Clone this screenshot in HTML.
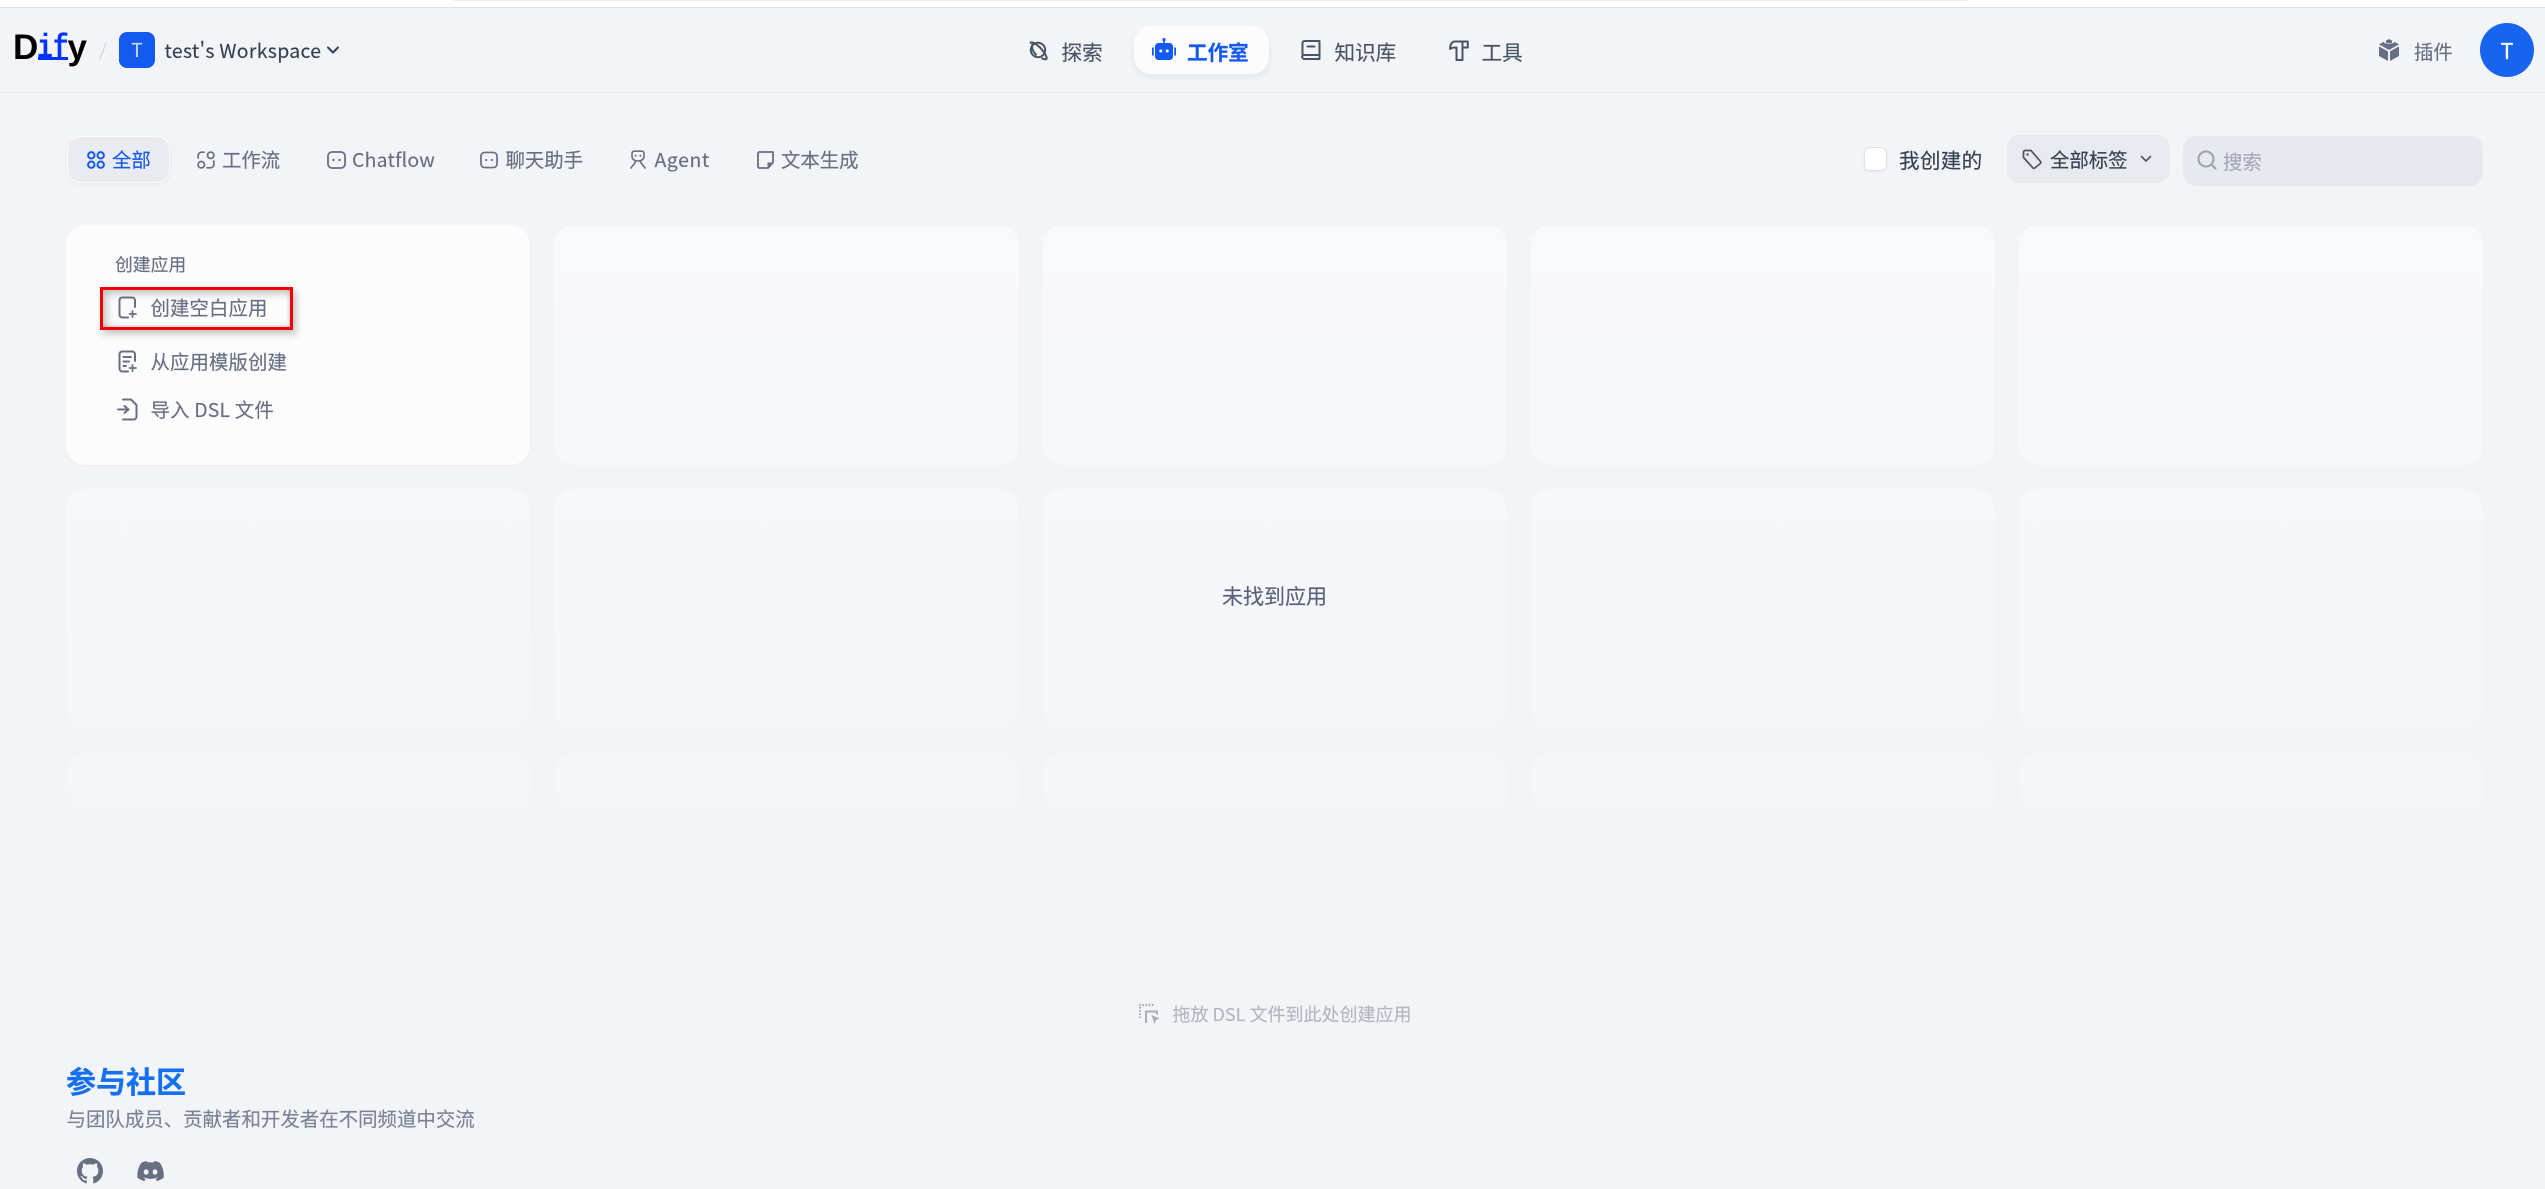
<!DOCTYPE html>
<html lang="zh"><head><meta charset="utf-8"><title>Dify</title>
<style>
html,body{margin:0;padding:0;background:#f2f4f8}
body{width:2545px;height:1189px;overflow:hidden;font-family:"Noto Sans CJK SC","Liberation Sans",sans-serif;color:#676f83}
#w{position:relative;width:2545px;height:1189px;overflow:hidden;background:#f2f4f8;filter:blur(.35px)}
.t{position:absolute;white-space:nowrap;line-height:30px;height:30px;font-size:19.4px;-webkit-text-stroke:.15px currentColor}
.b{position:absolute;box-sizing:border-box}
svg{position:absolute;overflow:visible}
.card{position:absolute;width:464.25px;height:240px;border-radius:19px;background:#f8f9fb}
.s{fill:none;stroke:currentColor;stroke-width:2;stroke-linecap:round;stroke-linejoin:round}
</style></head><body><div id="w">
<div class="b" style="left:0;top:0;width:2545px;height:7px;background:#fff"></div>
<div class="b" style="left:454px;top:0;width:1513px;height:1px;background:#eeeeee"></div>
<div class="b" style="left:0;top:7px;width:2545px;height:1px;background:#e0e1e4"></div>
<div class="b" style="left:0;top:92px;width:2545px;height:1px;background:#e4e6ea"></div>

<!-- logo -->
<div class="b" style="left:13px;top:23px;font:700 35px/50px 'Liberation Sans',sans-serif;color:#000">D</div>
<div class="b" style="left:37px;top:23.500px;font:700 33px/50px 'Liberation Mono',monospace;color:#0033ff;transform:scaleX(.8);transform-origin:0 0">if</div>
<div class="b" style="left:38px;top:57px;width:30px;height:3px;background:#0033ff"></div>
<div class="b" style="left:67.500px;top:23px;font:700 35px/50px 'Liberation Sans',sans-serif;color:#000">y</div>
<svg style="left:98px;top:42px" width="10" height="19"><path d="M1.500 18 L8 1" stroke="#d8dae0" stroke-width="1.400" fill="none"/></svg>
<div class="b" style="left:119px;top:32px;width:36px;height:36px;border-radius:8px;background:#155aef"></div>
<div class="t" style="left:119px;top:35px;width:36px;text-align:center;color:#c9d8fb;font-size:19px">T</div>
<div class="t" style="left:164.500px;top:35px;color:#354052;font-size:19.400px;letter-spacing:.34px">test's Workspace</div>
<svg style="left:326px;top:45px;color:#354052" width="14" height="10" viewBox="0 0 14 10"><path class="s" d="M2 2.500 L7 7.500 L12 2.500"/></svg>

<!-- nav -->
<svg style="left:1028px;top:40px;color:#495464" width="21" height="21" viewBox="0 0 21 21"><circle class="s" cx="10" cy="10" r="7.200"/><path class="s" d="M2.600 2.800C4 1.400 8 3.500 12 7.500s6.400 8.600 6.700 10.400c.3 1.800-2 1.800-4.600.5M4.400 4.400C3.200 7.500 5 12 8 14.600"/></svg>
<div class="t" style="left:1061.500px;top:36px;color:#495464;font-size:20.600px">探索</div>
<div class="b" style="left:1134px;top:26px;width:135px;height:48px;border-radius:17px;background:#fcfcfd;box-shadow:0 3px 7px rgba(16,24,40,.07)"></div>
<svg style="left:1152px;top:38px;color:#155aef" width="24" height="22" viewBox="0 0 24 22"><rect x="3" y="5" width="18" height="17" rx="3.500" fill="#155aef"/><rect x="11.200" y="2" width="1.600" height="4" fill="#155aef"/><circle cx="12" cy="1.600" r="1.600" fill="#155aef"/><rect x="0" y="9.500" width="1.800" height="8" fill="#155aef"/><rect x="22.200" y="9.500" width="1.800" height="8" fill="#155aef"/><circle cx="8.800" cy="13" r="1.500" fill="#fff"/><circle cx="15.200" cy="13" r="1.500" fill="#fff"/></svg>
<div class="t" style="left:1187px;top:36px;color:#155aef;font-weight:700;font-size:20.600px">工作室</div>
<svg style="left:1301px;top:40px;color:#495464" width="20" height="20" viewBox="0 0 20 20"><path class="s" d="M1.500 16V3A2 2 0 0 1 3.500 1H18.500V19H3.500A2 2 0 0 1 1.500 16ZM1.500 15H18.500M6.500 6.500H13.500"/></svg>
<div class="t" style="left:1334.500px;top:36px;color:#495464;font-size:20.600px">知识库</div>
<svg style="left:1449px;top:40px;color:#495464" width="20" height="21" viewBox="0 0 20 21"><path class="s" d="M1.200 9C1 5 2.500 1.500 6 1.500H18.800V7.500H13.500V20H7.500V7.500C4.500 7.500 3 7.500 1.200 9ZM13.500 1.500V7.500"/></svg>
<div class="t" style="left:1481.500px;top:36px;color:#495464;font-size:20.600px">工具</div>

<!-- plugin + avatar -->
<svg style="left:2379px;top:39px" width="20" height="22" viewBox="0 0 20 22"><path fill="#676f83" d="M10 0l3 1.600v2.200C12 4.600 8 4.600 7 3.800V1.600zM0 5.400l4.600-2.600C5 5.600 15 5.600 15.400 2.800L20 5.400 10 11zM0 7.400l9 5V22L0 17zM20 7.400l-9 5V22l9-5z"/></svg>
<div class="t" style="left:2414px;top:36px">插件</div>
<div class="b" style="left:2480px;top:23px;width:54px;height:54px;border-radius:50%;background:#1764ef"></div>
<div class="t" style="left:2480px;top:35px;width:54px;text-align:center;color:#fff;font-size:22px">T</div>

<!-- tabs -->
<div class="b" style="left:66.500px;top:135.500px;width:103.500px;height:47px;border-radius:13px;background:#e9ebf0;border:1.500px solid #fcfcfd;box-shadow:0 1px 3px rgba(16,24,40,.07)"></div>
<svg style="left:87px;top:151px;color:#155aef" width="18" height="18" viewBox="0 0 18 18"><g class="s"><circle cx="4.300" cy="4.300" r="3.200"/><circle cx="13.700" cy="4.300" r="3.200"/><circle cx="4.300" cy="13.700" r="3.200"/><circle cx="13.700" cy="13.700" r="3.200"/></g></svg>
<div class="t" style="left:112px;top:143.500px;color:#155aef">全部</div>
<svg style="left:197px;top:151px" width="18" height="18" viewBox="0 0 18 18" color="#676f83"><g class="s" style="stroke-width:1.700"><circle cx="4.300" cy="13.700" r="3.200"/><circle cx="13.700" cy="4.300" r="3.200"/><path d="M1.200 7V4.500A3.300 3.300 0 0 1 4.500 1.200H7M10 16.800h3.500a3.300 3.300 0 0 0 3.300-3.300V10"/></g></svg>
<div class="t" style="left:222px;top:143.500px">工作流</div>
<svg style="left:327px;top:151px" width="19" height="18" viewBox="0 0 19 18" color="#676f83"><rect class="s" style="stroke-width:1.800" x="1" y="1" width="17" height="16" rx="4"/><circle cx="6.500" cy="9" r="1.200" fill="#676f83"/><circle cx="12.500" cy="9" r="1.200" fill="#676f83"/></svg>
<div class="t" style="left:352px;top:143.500px;letter-spacing:.25px">Chatflow</div>
<svg style="left:480px;top:151px" width="18" height="18" viewBox="0 0 19 18" color="#676f83"><rect class="s" style="stroke-width:1.800" x="1" y="1" width="17" height="16" rx="4"/><circle cx="6.500" cy="9" r="1.200" fill="#676f83"/><circle cx="12.500" cy="9" r="1.200" fill="#676f83"/></svg>
<div class="t" style="left:505.500px;top:143.500px">聊天助手</div>
<svg style="left:630px;top:150px" width="16" height="19" viewBox="0 0 16 19" color="#676f83"><path class="s" style="stroke-width:1.600" d="M4 1.200h8a2.400 2.400 0 0 1 2 2.400v2.600c0 3-2.600 4.800-6 4.800S2 9.200 2 6.200V3.600A2.400 2.400 0 0 1 4 1.200ZM5.400 11.500C5 14.500 2.500 15 1 18M10.600 11.500c.4 3 2.900 3.500 4.400 6.500"/><circle cx="5.600" cy="5.800" r="1" fill="#676f83"/><circle cx="10.400" cy="5.800" r="1" fill="#676f83"/></svg>
<div class="t" style="left:654.500px;top:143.500px;letter-spacing:.6px">Agent</div>
<svg style="left:757px;top:151px" width="17" height="18" viewBox="0 0 17 18" color="#676f83"><path class="s" style="stroke-width:1.800" d="M1 2.500A1.500 1.500 0 0 1 2.500 1H16V11.500L11 17H2.500A1.500 1.500 0 0 1 1 15.500Z"/><path fill="#676f83" d="M10.500 16.500V11.500H15.500Z"/></svg>
<div class="t" style="left:781px;top:143.500px">文本生成</div>

<!-- right filters -->
<div class="b" style="left:1864px;top:147px;width:23px;height:24px;border-radius:6px;background:#fff;border:1px solid #dfe1e6;box-shadow:0 1px 2px rgba(16,24,40,.05)"></div>
<div class="t" style="left:1899px;top:144px;color:#354052;font-size:20.600px;letter-spacing:.3px">我创建的</div>
<div class="b" style="left:2007px;top:135px;width:163px;height:48px;border-radius:13px;background:#e8eaf0"></div>
<svg style="left:2022px;top:149px" width="20" height="21" viewBox="0 0 20 21" color="#495464"><path class="s" style="stroke-width:1.700" d="M1.500 3A1.500 1.500 0 0 1 3 1.500H9L18.500 12.500A1.500 1.500 0 0 1 18.300 14.500L12.800 19A1.500 1.500 0 0 1 10.800 18.800L1.500 8.500Z"/><circle cx="5.500" cy="5.500" r="1.200" fill="#495464"/></svg>
<div class="t" style="left:2050px;top:144px;color:#354052">全部标签</div>
<svg style="left:2140px;top:155px" width="12" height="8" viewBox="0 0 12 8" color="#495464"><path class="s" style="stroke-width:1.600" d="M1.500 1.500L6 6L10.500 1.500"/></svg>
<div class="b" style="left:2183px;top:136px;width:300px;height:50px;border-radius:13px;background:#e7e9f0"></div>
<svg style="left:2197px;top:150px" width="20" height="20" viewBox="0 0 20 20" color="#98a2b2"><circle class="s" cx="9" cy="9" r="7.500"/><path class="s" d="M14.800 14.800L18.500 18.500"/></svg>
<div class="t" style="left:2223px;top:146px;color:#a4a9b8">搜索</div>

<!-- cards -->
<div class="card" style="left:554.250px;top:225px"></div>
<div class="card" style="left:1042.500px;top:225px"></div>
<div class="card" style="left:1530.750px;top:225px"></div>
<div class="card" style="left:2019px;top:225px"></div>
<div class="card" style="left:66px;top:489px"></div>
<div class="card" style="left:554.250px;top:489px"></div>
<div class="card" style="left:1042.500px;top:489px"></div>
<div class="card" style="left:1530.750px;top:489px"></div>
<div class="card" style="left:2019px;top:489px"></div>
<div class="card" style="left:66px;top:753px"></div>
<div class="card" style="left:554.250px;top:753px"></div>
<div class="card" style="left:1042.500px;top:753px"></div>
<div class="card" style="left:1530.750px;top:753px"></div>
<div class="card" style="left:2019px;top:753px"></div>
<div class="b" style="left:0;top:225px;width:2545px;height:770px;background:linear-gradient(to bottom,rgba(242,244,248,0) 0%,rgba(242,244,248,.3) 34%,rgba(242,244,248,.62) 68%,rgba(242,244,248,.95) 88%,#f2f4f8 100%)"></div>

<!-- create card -->
<div class="b" style="left:66px;top:225px;width:464.250px;height:240px;border-radius:19px;background:#fcfcfd;box-shadow:0 1px 2px rgba(16,24,40,.03)"></div>
<div class="t" style="left:115px;top:249px;font-size:17.800px">创建应用</div>
<div class="b" style="left:100px;top:286.500px;width:193px;height:43.500px;background:#fcfcfd;border:3px solid #f40000;box-shadow:inset 4px 4px 8px rgba(60,60,60,.28),inset -1px -1px 3px rgba(60,60,60,.2),3px 4px 7px rgba(60,60,60,.3)"></div>
<svg style="left:118px;top:296px" width="20" height="23" viewBox="0 0 20 23" color="#676f83"><path class="s" d="M10 21.500H4A3 3 0 0 1 1.500 18.500V4A3 3 0 0 1 4 1.500H14A3 3 0 0 1 17 4V11"/><path class="s" d="M14.500 15V21M11.500 18H18" style="stroke-width:1.800"/></svg>
<div class="t" style="left:150.500px;top:291.500px;letter-spacing:.1px">创建空白应用</div>
<svg style="left:118px;top:350px" width="20" height="23" viewBox="0 0 20 23" color="#676f83"><path class="s" d="M10 21.500H4A3 3 0 0 1 1.500 18.500V4A3 3 0 0 1 4 1.500H14A3 3 0 0 1 17 4V11M5.500 7H13M5.500 11.500H11M5.500 16H8"/><path class="s" d="M14.500 15V21M11.500 18H18" style="stroke-width:1.800"/></svg>
<div class="t" style="left:150.500px;top:345.500px;letter-spacing:.1px">从应用模版创建</div>
<svg style="left:117px;top:398px" width="21" height="23" viewBox="0 0 21 23" color="#676f83"><path class="s" d="M6 1.500H14L19.500 7V19A3 3 0 0 1 16.500 21.500H6M1 11.500H11M7.500 8L11.500 11.500L7.500 15"/></svg>
<div class="t" style="left:150.500px;top:393.500px;letter-spacing:.2px">导入 DSL 文件</div>

<div class="t" style="left:1222px;top:581px;color:#59627a;font-size:21px">未找到应用</div>

<!-- drop hint -->
<svg style="left:1139px;top:1004px" width="22" height="21" viewBox="0 0 22 21" color="#a8acb6"><path d="M0 1h15M1 3v11" fill="none" stroke="#a8acb6" stroke-width="2.200" stroke-dasharray="1.600 1.600"/><path d="M7 19V7.500h11v3" fill="none" stroke="#a8acb6" stroke-width="2"/><path d="M12.500 11l8 3.500-3.500 1.500-1.500 4z" fill="#a8acb6"/></svg>
<div class="t" style="left:1172.500px;top:999px;color:#b3b6bf;font-size:18px">拖放 DSL 文件到此处创建应用</div>

<!-- footer -->
<div class="t" style="left:66px;top:1060px;line-height:40px;height:40px;color:#1570ef;font-weight:700;font-size:30px">参与社区</div>
<div class="t" style="left:66.500px;top:1103px;color:#7a8295;font-size:19.450px">与团队成员、贡献者和开发者在不同频道中交流</div>
<svg style="left:77px;top:1158px" width="26" height="26" viewBox="0 0 16 16"><path fill="#676f83" d="M8 0C3.580 0 0 3.580 0 8c0 3.540 2.290 6.530 5.470 7.590.4.070.55-.17.55-.38 0-.19-.010-.82-.010-1.490-2.010.370-2.530-.490-2.690-.940-.090-.230-.480-.940-.820-1.130-.280-.150-.680-.520-.010-.530.630-.010 1.080.580 1.230.820.720 1.210 1.870.870 2.330.660.070-.520.280-.870.510-1.070-1.780-.200-3.640-.890-3.640-3.950 0-.870.310-1.590.820-2.150-.080-.200-.360-1.020.080-2.120 0 0 .670-.210 2.200.820.640-.180 1.320-.270 2-.270s1.360.090 2 .270c1.530-1.040 2.200-.820 2.200-.820.440 1.100.160 1.920.080 2.120.510.560.820 1.270.820 2.150 0 3.070-1.870 3.750-3.650 3.950.290.250.540.730.540 1.480 0 1.070-.010 1.930-.010 2.200 0 .210.150.460.550.380A8.010 8.010 0 0 0 16 8c0-4.420-3.580-8-8-8z"/></svg>
<svg style="left:137px;top:1161px" width="27" height="20" viewBox="0 0 16 12"><path fill="#676f83" d="M13.550 1A13.200 13.200 0 0 0 10.290 0c-.140.250-.300.590-.410.860a12.300 12.300 0 0 0-3.650 0A9 9 0 0 0 5.810 0a13.200 13.200 0 0 0-3.260 1C.48 4.090-.080 7.100.200 10.070A13.300 13.300 0 0 0 4.200 12.100c.320-.440.610-.900.850-1.390a8.600 8.600 0 0 1-1.340-.650c.110-.080.220-.170.320-.250a9.500 9.500 0 0 0 8.040 0c.110.090.210.170.320.250-.430.250-.880.470-1.340.650.250.490.530.950.850 1.390a13.200 13.200 0 0 0 4-2.030c.330-3.440-.560-6.420-2.350-9.070zM5.400 8.240c-.790 0-1.440-.720-1.440-1.610s.630-1.620 1.440-1.620 1.450.730 1.440 1.620c0 .890-.640 1.610-1.440 1.610zm5.320 0c-.790 0-1.440-.720-1.440-1.610s.630-1.620 1.440-1.620 1.450.730 1.440 1.620c0 .890-.630 1.610-1.440 1.610z"/></svg>
</div></body></html>
